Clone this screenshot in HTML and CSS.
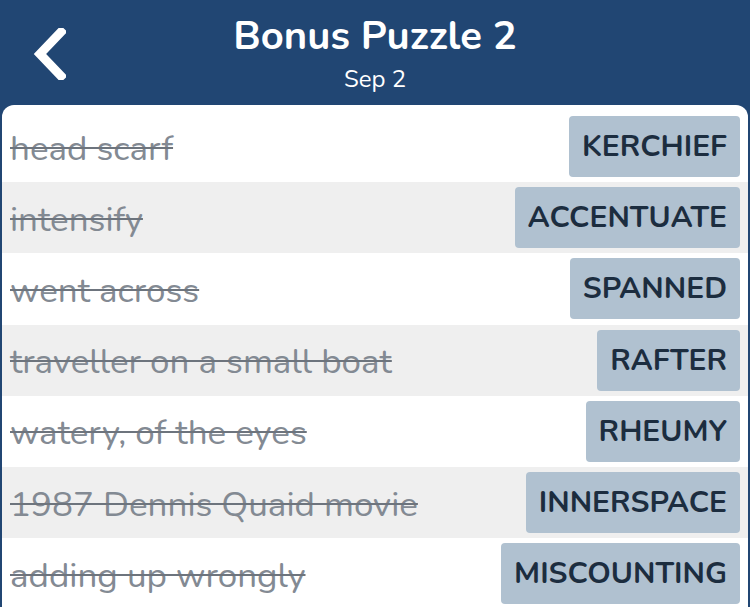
FILE: index.html
```html
<!DOCTYPE html>
<html>
<head>
<meta charset="utf-8">
<link rel="stylesheet" href="styles.css">
</head>
<body>
<header class="topbar">
  <button class="back" aria-label="Back">
    <svg width="34" height="52" viewBox="0 0 34 52"><path d="M29 4 L8 26 L29 48" fill="none" stroke="#fff" stroke-width="9" stroke-linecap="square" stroke-linejoin="miter"/></svg>
  </button>
  <div class="titles">
    <div class="title">Bonus Puzzle 2</div>
    <div class="subtitle">Sep 2</div>
  </div>
</header>
<main class="card">
  <div class="row"><span class="clue">head scarf</span><span class="answer">KERCHIEF</span></div>
  <div class="row alt"><span class="clue">intensify</span><span class="answer">ACCENTUATE</span></div>
  <div class="row"><span class="clue">went across</span><span class="answer">SPANNED</span></div>
  <div class="row alt"><span class="clue">traveller on a small boat</span><span class="answer">RAFTER</span></div>
  <div class="row"><span class="clue">watery, of the eyes</span><span class="answer">RHEUMY</span></div>
  <div class="row alt"><span class="clue">1987 Dennis Quaid movie</span><span class="answer">INNERSPACE</span></div>
  <div class="row"><span class="clue">adding up wrongly</span><span class="answer">MISCOUNTING</span></div>
</main>
</body>
</html>
```
FILE: styles.css
```css
html, body {
  margin: 0;
  padding: 0;
  background: #214673;
  font-family: "Nunito", "Lato", "Open Sans", sans-serif;
  overflow: hidden;
}
.topbar {
  position: relative;
  height: 105px;
  display: flex;
  justify-content: center;
  align-items: flex-start;
}
.back {
  position: absolute;
  left: 32px;
  top: 28px;
  background: none;
  border: 0;
  padding: 0;
  display: flex;
}
.titles {
  text-align: center;
  color: #fff;
  padding-top: 12px;
}
.title {
  font-size: 40px;
  font-weight: 700;
  line-height: 48px;
}
.subtitle {
  font-size: 24px;
  line-height: 30px;
  margin-top: 4px;
}
.card {
  background: #fff;
  margin: 0 2px;
  padding-top: 6px;
  border-radius: 12px 12px 0 0;
  overflow: hidden;
  height: 502px;
}
.row {
  height: 71.2px;
  display: flex;
  align-items: center;
  justify-content: space-between;
  padding: 0 8px 0 8px;
}
.row.alt {
  background: #efefef;
}
.clue {
  font-size: 35px;
  color: #838a93;
  padding-top: 3px;
  text-decoration: line-through;
  text-decoration-thickness: 2px;
  text-decoration-color: #6d747d;
}
.answer {
  background: #b0c1d0;
  color: #1c2d3f;
  font-weight: 700;
  font-size: 30px;
  height: 61px;
  display: flex;
  align-items: center;
  padding: 0 13px;
  border-radius: 4px;
}
```
